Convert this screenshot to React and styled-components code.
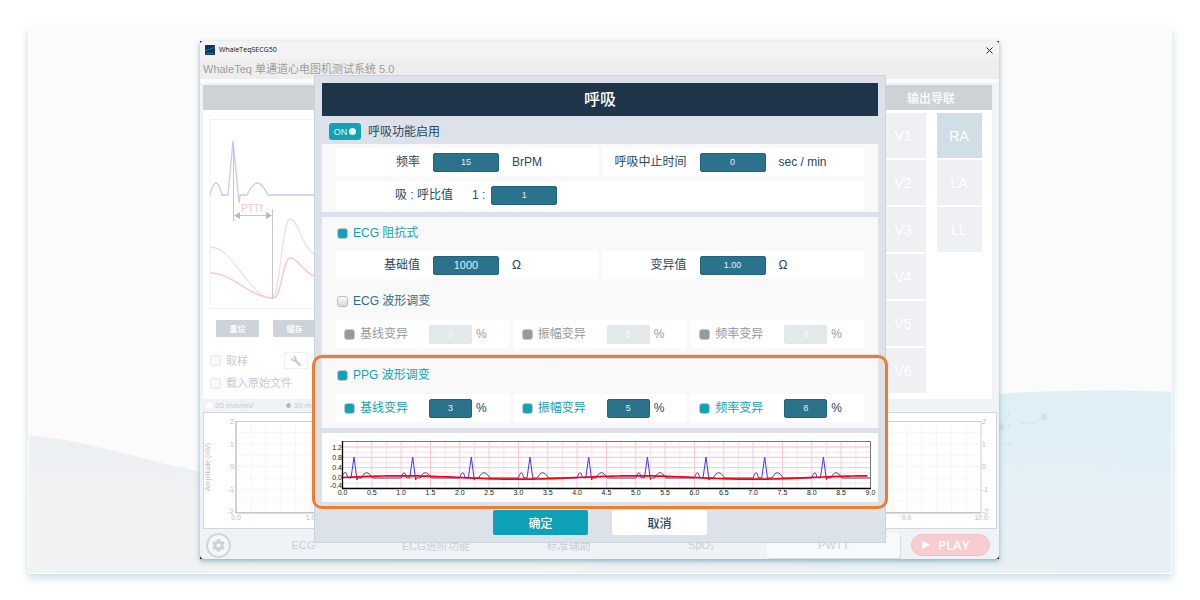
import React from "react";
import styled, { createGlobalStyle, css } from "styled-components";
import { FaWrench, FaCog } from "react-icons/fa";

const LEADS = ["V1", "RA", "V2", "LA", "V3", "LL", "V4", "", "V5", "", "V6"];
const TABS = ["ECG", "ECG进阶功能", "标准辅助", "SpO₂", "PWTT"];
const MODULATIONS = [
  { name: "基线变异", value: "3" },
  { name: "振幅变异", value: "5" },
  { name: "频率变异", value: "8" },
];

const range = (n) => Array.from({ length: n }, (_, i) => i);

const App = () => {
  return (
    <>
      <GlobalStyle />
      <Frame>
        <Backdrop />
        <Shell>
          <Window>
            <TitleBar>
              <AppLogo />
              <TitleText>WhaleTeqSECG50</TitleText>
              <CloseButton type="button" aria-label="Close">
                <svg width="7" height="7" viewBox="0 0 7 7">
                  <path d="M.5 .5L6.5 6.5M6.5 .5L.5 6.5" stroke="#222" />
                </svg>
              </CloseButton>
            </TitleBar>
            <Heading>WhaleTeq 单通道心电图机测试系统 5.0</Heading>
            <Body>
              <Panels>
                <SignalPanel />
                <LeadsPanel />
              </Panels>
              <ScaleRow>
                <ScaleLabel>
                  <Radio type="radio" name="scale" />
                  20 mm/mV
                </ScaleLabel>
                <ScaleLabel>
                  <Radio type="radio" name="scale" defaultChecked />
                  10 mm/mV
                </ScaleLabel>
              </ScaleRow>
              <MainChart />
            </Body>
            <Footer>
              <GearButton type="button" aria-label="Settings">
                <FaCog size={13} />
              </GearButton>
              <Tabs>
                {TABS.map((tab) => (
                  <Tab type="button" key={tab} $active={tab === "PWTT"}>
                    {tab}
                  </Tab>
                ))}
              </Tabs>
              <PlayButton type="button">
                <svg width="8" height="8" viewBox="0 0 8 8">
                  <path d="M0 0L8 4L0 8Z" fill="#fff" />
                </svg>
                PLAY
              </PlayButton>
            </Footer>
          </Window>
          <RespirationDialog />
        </Shell>
      </Frame>
    </>
  );
};

const Backdrop = () => (
  <BackdropSvg viewBox="0 0 1144 548" preserveAspectRatio="xMidYMid slice">
    <defs>
      <linearGradient id="sea" x1="0" y1="0" x2="-0.2" y2="1">
        <stop offset="0" stopColor="#e0eff6" />
        <stop offset="0.5" stopColor="#e7eff6" />
        <stop offset="1" stopColor="#ebf0f2" />
      </linearGradient>
      <linearGradient id="sand" x1="0.2" y1="0" x2="0" y2="1">
        <stop offset="0" stopColor="#ebf0f4" />
        <stop offset="0.3" stopColor="#eff1f3" />
        <stop offset="1" stopColor="#f1f3f2" />
      </linearGradient>
    </defs>
    <path d="M0 410C60 414 110 434 172 446C330 475 470 500 700 500V548H0Z" fill="url(#sand)" />
    <path d="M600 470C720 400 860 372 971 368C1030 364 1090 364 1144 366V548H560Z" fill="url(#sea)" />
    <g fill="#d3e0e7" stroke="#d9e5eb">
      <path d="M960 420L974 400L982 388M968 414L982 400M960 417L982 419M995 398L1005 397L1016 391" fill="none" />
      <circle cx="974" cy="401" r="3" />
      <circle cx="982" cy="388" r="1" />
      <circle cx="982" cy="400" r="1" />
      <circle cx="982" cy="419" r="1" />
      <circle cx="995" cy="397" r="1" />
      <circle cx="1005" cy="397" r="1" />
      <circle cx="1017" cy="391" r="3" />
    </g>
  </BackdropSvg>
);

const AppLogo = () => (
  <svg width="10" height="10" viewBox="0 0 10 10">
    <rect width="10" height="10" rx="1" fill="#07355f" />
    <path d="M0 5.5C3 5.5 6 3.5 9.5 2.5" stroke="#1d8fb8" strokeWidth="0.8" fill="none" />
    <path d="M1.5 8.3H8.5" stroke="#5f8fb0" strokeWidth="1" strokeDasharray="1.3 .5" />
  </svg>
);

const SignalPanel = () => (
  <Panel>
    <PanelHeader />
    <SignalBody>
      <svg width="160" height="190" viewBox="0 0 160 190" fill="none">
        <rect x="1" y="0.5" width="158" height="189" stroke="#eef2f6" />
        <path d="M1 76C5 60 9 60 13 76H19L24 22L30 84L31 76H38C46 60 51 60 59 76H159" stroke="#c9c9fb" strokeWidth="1.3" />
        <path d="M1 128C25 128 40 179 63 179C71 179 73 100 81 100C89 100 94 130 105 135C120 142 140 165 159 170" stroke="#eadffa" strokeWidth="1.3" />
        <path d="M1 154C25 154 40 179 65 179C72 179 74 139 81 139C89 139 94 153 105 157C120 162 140 174 159 176" stroke="#fac9cb" strokeWidth="1.5" />
        <path d="M24.500 24V102M63.500 90V180M27 96.500H61" stroke="#c6c6c6" />
        <path d="M25 96.500L31 93V100ZM63 96.500L57 93V100Z" fill="#bbb" />
        <text x="32" y="93" fontSize="10" fill="#f8c6ce">PTTf</text>
      </svg>
      <ButtonRow>
        <SmallButton type="button">重设</SmallButton>
        <SmallButton type="button">储存</SmallButton>
      </ButtonRow>
      <SampleRow>
        <FadedLabel>
          <FadedCheck type="checkbox" />
          取样
        </FadedLabel>
        <WrenchButton type="button" aria-label="Sampling options">
          <FaWrench size={10} />
        </WrenchButton>
      </SampleRow>
      <FadedLabel>
        <FadedCheck type="checkbox" />
        载入原始文件
      </FadedLabel>
    </SignalBody>
  </Panel>
);

const LeadsPanel = () => (
  <Panel>
    <PanelHeader>输出导联</PanelHeader>
    <LeadGrid>
      {LEADS.map((lead, i) =>
        lead ? (
          <Lead type="button" key={i} $on={lead === "RA"}>
            {lead}
          </Lead>
        ) : (
          <span key={i} />
        )
      )}
    </LeadGrid>
  </Panel>
);

const MainChart = () => (
  <ChartSvg viewBox="0 0 794 117" fontSize="7" fill="#bdbdbd">
    <rect x="0.5" y="0.5" width="793" height="116" fill="#fff" stroke="#d3d6d8" />
    <g stroke="#fdf4f4">
      {range(49).map((i) => (
        <path key={i} d={`M${48 + i * 14.9} 10V100`} />
      ))}
      {range(7).map((i) => (
        <path key={i} d={`M33 ${20.5 + i * 11.4}H777`} />
      ))}
    </g>
    <rect x="33" y="9.500" width="745" height="91" fill="none" stroke="#cfcfcf" />
    <path d="M33 9V101H778" fill="none" stroke="#bdbdbd" />
    {[2, 1, 0, -1, -2].map((v, i) => (
      <g key={v}>
        <text x="31" y={12 + i * 22.500} textAnchor="end">{v}</text>
        <text x="779" y={12 + i * 22.500}>{v}</text>
      </g>
    ))}
    {range(11).map((i) => (
      <text key={i} x={33 + i * 74.5} y="108" textAnchor="middle">{i.toFixed(1)}</text>
    ))}
    <text transform="translate(7 55) rotate(-90)" textAnchor="middle">Amplitude (mV)</text>
  </ChartSvg>
);

// one beat per second, 58.67 units wide
const beat = (i) => {
  const x = 20.5 + i * 58.67;
  const p = (dx) => (x + dx).toFixed(1);
  const start = i === 0 ? `M${p(0)} 42` : `L${p(0)} 44`;
  return `${start}C${p(2)} 37 ${p(4)} 37 ${p(5)} 43.500L${p(8.5)} 44L${p(11.5)} 23L${p(14.5)} 46L${p(15)} 44H${p(19)}C${p(22)} 37 ${p(26)} 37 ${p(30)} 44`;
};

const ecgPath = range(9).map(beat).join("") + "H548";

const breathPath = range(106)
  .map((i) => {
    const x = 20.5 + i * 5;
    const y = 43.5 - 1.7 * Math.sin(((x - 20.5) / 234.7) * 2 * Math.PI);
    return `${i ? "L" : "M"}${x} ${y.toFixed(2)}`;
  })
  .join("");

const PreviewChart = () => (
  <PreviewSvg viewBox="0 -1 556 69" fontSize="7" fill="#222">
    <g stroke="#ffe2e7">
      {range(18).map((i) => (
        <path key={i} d={`M${35.2 + i * 29.33} 8V54`} />
      ))}
      {range(9).map((i) => (
        <path key={i} d={`M21 ${13 + i * 5.15}H548`} />
      ))}
    </g>
    <g stroke="#ffc6cf">
      {range(17).map((i) => (
        <path key={i} d={`M${49.8 + i * 29.33} 8V54`} />
      ))}
      {range(4).map((i) => (
        <path key={i} d={`M21 ${13 + i * 10.3}H548`} />
      ))}
    </g>
    <path d="M20 7.500H548.500V54" fill="none" stroke="#777" />
    <path d={ecgPath} fill="none" stroke="#3a3af5" />
    <path d={breathPath} fill="none" stroke="#f00" strokeWidth="1.7" />
    <path d="M20.500 7V54.500H549" fill="none" stroke="#000" strokeWidth="1.3" />
    {["1.2", "0.8", "0.4", "0.0", "-0.4"].map((v, i) => (
      <text key={v} x="20" y={i === 4 ? 54 : 15.5 + i * 10.3} textAnchor="end">{v}</text>
    ))}
    {range(19).map((i) => (
      <text key={i} x={20.5 + i * 29.33} y="61" textAnchor="middle">{(i / 2).toFixed(1)}</text>
    ))}
  </PreviewSvg>
);

const ModulationRow = ({ id, disabled }) => (
  <ModCells $cols={3}>
    {MODULATIONS.map(({ name, value }, i) => (
      <ModCell key={name} $disabled={disabled}>
        <ModLabel>
          <Check type="checkbox" defaultChecked disabled={disabled} />
          {name}
        </ModLabel>
        <Value
          id={`${id}-${i}`}
          aria-label={name}
          defaultValue={value}
          disabled={disabled}
        />
        <Unit>%</Unit>
      </ModCell>
    ))}
  </ModCells>
);

const RespirationDialog = () => (
  <Dialog role="dialog" aria-labelledby="dialog-title">
    <DialogTitle id="dialog-title">呼吸</DialogTitle>
    <EnableRow>
      <Toggle type="button" role="switch" aria-checked="true" aria-labelledby="enable-label">
        ON
        <Knob />
      </Toggle>
      <span id="enable-label">呼吸功能启用</span>
    </EnableRow>
    <Section>
      <Cells $cols={2}>
        <FieldCell>
          <FieldLabel htmlFor="rate">频率</FieldLabel>
          <Value id="rate" defaultValue="15" />
          <Unit>BrPM</Unit>
        </FieldCell>
        <FieldCell>
          <FieldLabel htmlFor="apnea">呼吸中止时间</FieldLabel>
          <Value id="apnea" defaultValue="0" />
          <Unit>sec / min</Unit>
        </FieldCell>
      </Cells>
      <RatioCell>
        <RatioLabel htmlFor="ratio">吸 : 呼比值</RatioLabel>
        <span>1 :</span>
        <Value id="ratio" defaultValue="1" $wide />
      </RatioCell>
    </Section>
    <Section>
      <SectionHead>
        <Check type="checkbox" defaultChecked />
        <span>ECG 阻抗式</span>
      </SectionHead>
      <Cells $cols={2}>
        <FieldCell>
          <FieldLabel htmlFor="base">基础值</FieldLabel>
          <Value id="base" defaultValue="1000" $large />
          <Unit>Ω</Unit>
        </FieldCell>
        <FieldCell>
          <FieldLabel htmlFor="variation">变异值</FieldLabel>
          <Value id="variation" defaultValue="1.00" />
          <Unit>Ω</Unit>
        </FieldCell>
      </Cells>
      <SectionHead $off $gap>
        <Check type="checkbox" />
        <span>ECG 波形调变</span>
      </SectionHead>
      <ModulationRow id="ecg" disabled />
    </Section>
    <Highlight>
      <Section>
        <SectionHead>
          <Check type="checkbox" defaultChecked />
          <span>PPG 波形调变</span>
        </SectionHead>
        <ModulationRow id="ppg" />
      </Section>
      <PreviewChart />
    </Highlight>
    <Actions>
      <ActionButton type="button" $primary>确定</ActionButton>
      <ActionButton type="button">取消</ActionButton>
    </Actions>
  </Dialog>
);

const GlobalStyle = createGlobalStyle`
  * {
    box-sizing: border-box;
  }
  body {
    margin: 0;
    background: #fff;
    font-family: "Liberation Sans", "Noto Sans CJK SC", sans-serif;
    font-size: 12px;
    line-height: 16px;
  }
  button, input {
    font-family: inherit;
    border: 0;
    margin: 0;
    padding: 0;
  }
  svg {
    display: block;
  }
`;

const Frame = styled.main`
  position: relative;
  margin: 26px 28px;
  padding: 15px 173px 15px 172px;
  background-color: #fbfbfb;
  box-shadow: 0 4px 8px rgba(150, 190, 208, 0.5);
`;

const BackdropSvg = styled.svg`
  position: absolute;
  inset: 0;
  width: 100%;
  height: 100%;
  border: 1px solid #fff;
`;

const Shell = styled.div`
  position: relative;
  background-color: #111;
  box-shadow: 0 2px 5px rgba(90, 150, 172, 0.7);
`;

const Window = styled.div`
  background-color: #eff3f7;
  border-radius: 4px;
  overflow: hidden;
`;

const TitleBar = styled.header`
  display: flex;
  align-items: center;
  gap: 4px;
  height: 18px;
  padding: 0 6px 0 5px;
  background-color: #f3f3f3;
`;

const TitleText = styled.span`
  flex: 1;
  font-family: "Open Sans", sans-serif;
  font-size: 7px;
  color: #111;
`;

const CloseButton = styled.button`
  background: none;
`;

const Heading = styled.h1`
  height: 20px;
  margin: 0 0 4px;
  padding-left: 3px;
  background-color: #eee;
  box-shadow: 0 4px 0 #fafbfc;
  color: #9d9d9d;
  font-size: 11px;
  font-weight: 400;
  line-height: 20px;
`;

const Body = styled.div`
  padding: 2px 2px 0 3px;
`;

const Panels = styled.div`
  display: grid;
  grid-template-columns: 1fr 122px;
  padding-right: 5px;
`;

const Panel = styled.section`
  background-color: #fff;
`;

const PanelHeader = styled.h2`
  height: 25px;
  margin: 0;
  background-color: #ccd2d5;
  color: #f6f8f9;
  font-size: 12px;
  line-height: 28px;
  text-align: center;
`;

const SignalBody = styled.div`
  display: flex;
  flex-direction: column;
  padding: 9px 6px 0;
`;

const ButtonRow = styled.div`
  display: flex;
  gap: 14px;
  padding: 11px 0 15px 7px;
`;

const SmallButton = styled.button`
  width: 43px;
  height: 17px;
  border-radius: 1px;
  background-color: #ccd3da;
  color: #fff;
  font-size: 8px;
  font-weight: 700;
`;

const SampleRow = styled.div`
  display: flex;
  align-items: center;
  gap: 36px;
  margin-bottom: 6px;
`;

const FadedLabel = styled.label`
  display: flex;
  align-items: center;
  gap: 5px;
  padding-left: 1px;
  color: #c5ccd2;
  font-size: 11px;
`;

const FadedCheck = styled.input`
  appearance: none;
  width: 11px;
  height: 11px;
  border: 1px solid #e6e8ea;
  border-radius: 3px;
  background-color: #fafafa;
`;

const WrenchButton = styled.button`
  display: flex;
  align-items: center;
  justify-content: center;
  width: 24px;
  height: 17px;
  border: 1px solid #f0f1f2;
  background-color: #fff;
  color: #c6cbce;
  svg {
    transform: rotate(-90deg);
  }
`;

const LeadGrid = styled.div`
  display: grid;
  grid-template-columns: 45px 45px;
  grid-auto-rows: 45px;
  justify-content: center;
  gap: 2px 11px;
  padding: 3px 0 6px;
`;

const Lead = styled.button`
  background-color: ${({ $on }) => ($on ? "#cfdfe5" : "#eff0f3")};
  color: #fff;
  font-size: 14px;
`;

const ScaleRow = styled.div`
  display: flex;
  gap: 31px;
  height: 13px;
  padding-left: 3px;
`;

const ScaleLabel = styled.label`
  display: flex;
  align-items: center;
  gap: 2px;
  color: #c6cacd;
  font-size: 8px;
`;

const Radio = styled.input`
  appearance: none;
  width: 7px;
  height: 7px;
  border: 1px solid #fff;
  border-radius: 50%;
  background-color: #fff;
  &:checked {
    background-color: #b3b8bb;
  }
`;

const ChartSvg = styled.svg`
  width: 100%;
`;

const Footer = styled.footer`
  display: flex;
  align-items: center;
  height: 30px;
  padding: 2px 9px 0 6px;
`;

const GearButton = styled.button`
  display: flex;
  align-items: center;
  justify-content: center;
  width: 25px;
  height: 25px;
  margin-right: 6px;
  border: 2px solid #cfd5db;
  border-radius: 50%;
  background-color: #f5f7f9;
  color: #cbd1d8;
`;

const Tabs = styled.nav`
  flex: 1;
  display: grid;
  grid-template-columns: repeat(5, 1fr);
`;

const Tab = styled.button`
  height: 25px;
  background: none;
  color: #c9cfd5;
  font-size: 11px;
  ${({ $active }) =>
    $active &&
    css`
      border-radius: 3px;
      background-color: #f7f9fa;
      box-shadow: 1px 1px 1px #d8dcdf;
    `}
`;

const PlayButton = styled.button`
  display: flex;
  align-items: center;
  gap: 8px;
  width: 79px;
  height: 22px;
  margin-left: 11px;
  padding-left: 10px;
  border: 1px solid #efc2c8;
  border-radius: 11px;
  background-color: #f7cdd1;
  color: #fff;
  font-family: "Open Sans", sans-serif;
  font-size: 13px;
  font-weight: 600;
`;

const Dialog = styled.div`
  position: absolute;
  top: 34px;
  left: 114px;
  right: 113px;
  padding: 7px;
  border: 1px solid #cbd3dc;
  background-color: #dde1ea;
  color: #2a475d;
`;

const DialogTitle = styled.h2`
  margin: 0;
  background-color: #1f354a;
  color: #fff;
  font-size: 16px;
  font-weight: 500;
  line-height: 33px;
  text-align: center;
`;

const EnableRow = styled.div`
  display: flex;
  align-items: center;
  gap: 7px;
  height: 28px;
  padding: 3px 0 0 7px;
`;

const Toggle = styled.button`
  display: flex;
  align-items: center;
  justify-content: center;
  gap: 2px;
  width: 32px;
  height: 17px;
  border-radius: 3px;
  background-color: #12a2b6;
  color: #e4f7f8;
  font-size: 9px;
`;

const Knob = styled.span`
  width: 7px;
  height: 7px;
  border-radius: 50%;
  background-color: #e4f7f8;
`;

const Section = styled.section`
  display: flex;
  flex-direction: column;
  gap: 5px;
  margin-bottom: 5px;
  padding: 4px 14px 3px;
  background-color: #f9f9f9;
`;

const Cells = styled.div`
  display: grid;
  grid-template-columns: repeat(${({ $cols }) => $cols}, 1fr);
  gap: 5px;
`;

const ModCells = styled(Cells)`
  margin: 1px 0 3px;
`;

const FieldCell = styled.div`
  display: grid;
  grid-template-columns: 84px 66px 1fr;
  align-items: center;
  gap: 13px;
  height: 28px;
  background-color: #fff;
`;

const FieldLabel = styled.label`
  text-align: right;
  white-space: nowrap;
`;

const Value = styled.input`
  width: ${({ $wide }) => ($wide ? "66px" : "100%")};
  height: 19px;
  border: 1px solid #21647f;
  border-radius: 2px;
  background-color: #2b728c;
  color: #e6f0f3;
  font-size: ${({ $large }) => ($large ? "11px" : "9px")};
  text-align: center;
  &:disabled {
    border-color: #e3e8eb;
    background-color: #e3e8eb;
    color: #f7f9fa;
  }
`;

const Unit = styled.span`
  white-space: nowrap;
`;

const RatioCell = styled.div`
  display: flex;
  align-items: center;
  gap: 6px;
  height: 28px;
  padding-left: 59px;
  background-color: #fff;
`;

const RatioLabel = styled.label`
  width: 71px;
`;

const SectionHead = styled.label`
  display: flex;
  align-items: center;
  align-self: flex-start;
  gap: 5px;
  height: 24px;
  margin-top: ${({ $gap }) => ($gap ? "5px" : "0")};
  margin-bottom: 1px;
  padding-left: 1px;
  color: ${({ $off }) => ($off ? "#2b6f8a" : "#12a2b6")};
`;

const Check = styled.input`
  appearance: none;
  flex: none;
  width: 11px;
  height: 11px;
  border: 1px solid #bdbdbd;
  border-radius: 3px;
  background: linear-gradient(#fafafa, #d8d8d8);
  &:checked {
    border-color: #c4c8c9;
    background: #12a2b6;
  }
  &:checked:disabled {
    background: #999;
  }
`;

const ModCell = styled.div`
  display: grid;
  grid-template-columns: 81px 43px 1fr;
  align-items: center;
  gap: 4px;
  height: 28px;
  padding-left: 8px;
  background-color: #fff;
  color: ${({ $disabled }) => ($disabled ? "#999" : "#2a475d")};
  label {
    color: ${({ $disabled }) => ($disabled ? "#999" : "#12a2b6")};
  }
`;

const ModLabel = styled.label`
  display: flex;
  align-items: center;
  gap: 5px;
`;

// callout frame around the PPG settings and their preview
const Highlight = styled.div`
  position: relative;
  &::after {
    content: "";
    position: absolute;
    inset: -4px -10px -7px;
    border: 3px solid #ed7d31;
    border-radius: 10px;
    pointer-events: none;
  }
`;

const PreviewSvg = styled.svg`
  width: 100%;
  background-color: #fff;
`;

const Actions = styled.div`
  display: flex;
  justify-content: center;
  gap: 24px;
  padding-top: 8px;
`;

const ActionButton = styled.button`
  width: 95px;
  height: 25px;
  border-radius: 2px;
  background-color: ${({ $primary }) => ($primary ? "#0ea2b8" : "#fff")};
  color: ${({ $primary }) => ($primary ? "#fff" : "#2a475d")};
  font-size: 12px;
  font-weight: 500;
`;

export default App;
